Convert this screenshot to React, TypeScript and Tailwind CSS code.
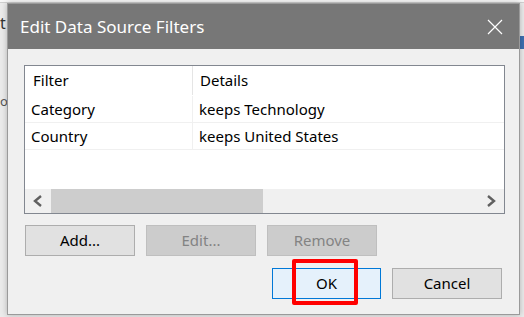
import React from 'react'

const FONT = { fontFamily: '"Noto Sans", "Open Sans", Arial, sans-serif' }

const ROWS = [
  { filter: 'Category', details: 'keeps Technology' },
  { filter: 'Country', details: 'keeps United States' },
]

function Chevron({ dir }: { dir: 'left' | 'right' }) {
  return (
    <svg width="10" height="12" viewBox="0 0 10 12">
      <polyline
        points={dir === 'left' ? '8,1 2,6 8,11' : '2,1 8,6 2,11'}
        fill="none"
        stroke="#606060"
        strokeWidth="2.4"
      />
    </svg>
  )
}

function Btn({ label, disabled, primary, w = 'w-[110px]' }: { label: string; disabled?: boolean; primary?: boolean; w?: string }) {
  const tone = primary
    ? 'bg-[#e5f1fb] border-[#0078d7] text-black'
    : disabled
    ? 'bg-[#cccccc] border-[#bfbfbf] text-[#838383]'
    : 'bg-[#e1e1e1] border-[#adadad] text-black'
  return (
    <div className={`${w} h-[31px] border flex items-center justify-center text-[15px] ${tone}`}>
      {label}
    </div>
  )
}

export default function App() {
  return (
    <div className="relative w-[524px] h-[317px] overflow-hidden bg-[#ebebeb]" style={FONT}>
      {/* background app peeking around the dialog */}
      <div className="h-[3px] bg-[#f7f7f7] border-b border-[#d0d0d0]" />
      <div className="absolute left-0 top-[15px] text-[16px] leading-none text-[#333]">t</div>
      <div className="absolute left-0 top-[95px] text-[13px] leading-none text-[#555]">o</div>
      <div className="absolute right-0 top-[36px] w-[4px] h-[13px] bg-[#3d6fb0]" />

      {/* dialog */}
      <div className="absolute left-[7px] top-[3px] w-[513px] h-[312px] border border-[#9a9a9a] bg-[#f0f0f0] shadow-[0_0_6px_rgba(0,0,0,0.25)] flex flex-col">
        <div className="h-[45px] shrink-0 bg-[#777777] flex items-center justify-between pl-[12px] pr-[16px]">
          <span className="text-white text-[17px] leading-none">Edit Data Source Filters</span>
          <svg width="16" height="16" viewBox="0 0 16 16">
            <path d="M1 1 L15 15 M15 1 L1 15" stroke="#ffffff" strokeWidth="1.2" />
          </svg>
        </div>

        <div className="flex-1 pl-[16px] pt-[16px]">
          {/* list view */}
          <div className="w-[481px] h-[149px] border border-[#828790] bg-white flex flex-col text-[15px] text-black">
            <div className="h-[30px] flex items-center border-b border-white">
              <div className="w-[168px] h-full pl-[8px] flex items-center border-r border-[#e5e5e5]">Filter</div>
              <div className="pl-[7px]">Details</div>
            </div>
            {ROWS.map(r => (
              <div key={r.filter} className="h-[27px] flex items-center border-b border-[#f0f0f0]">
                <div className="w-[168px] h-full pl-[6px] flex items-center border-r border-[#f0f0f0]">{r.filter}</div>
                <div className="pl-[6px]">{r.details}</div>
              </div>
            ))}
            <div className="flex-1" />
            {/* horizontal scrollbar */}
            <div className="h-[24px] bg-[#f0f0f0] flex items-center">
              <div className="w-[26px] h-full flex items-center justify-center">
                <Chevron dir="left" />
              </div>
              <div className="w-[212px] h-full bg-[#cdcdcd]" />
              <div className="flex-1" />
              <div className="w-[26px] h-full flex items-center justify-center">
                <Chevron dir="right" />
              </div>
            </div>
          </div>

          <div className="flex gap-[11px] mt-[11px] pl-[1px]">
            <Btn label="Add..." w="w-[110px]" />
            <Btn label="Edit..." disabled w="w-[110px]" />
            <Btn label="Remove" disabled w="w-[110px]" />
          </div>

          <div className="flex justify-end gap-[11px] mt-[12px] pr-[17px]">
            <div className="relative">
              <Btn label="OK" primary w="w-[109px]" />
              <div className="absolute left-[20px] top-[-9px] w-[66px] h-[46px] border-[4px] border-[#ff0000] rounded-[2px]" />
            </div>
            <Btn label="Cancel" w="w-[110px]" />
          </div>
        </div>
      </div>
    </div>
  )
}
